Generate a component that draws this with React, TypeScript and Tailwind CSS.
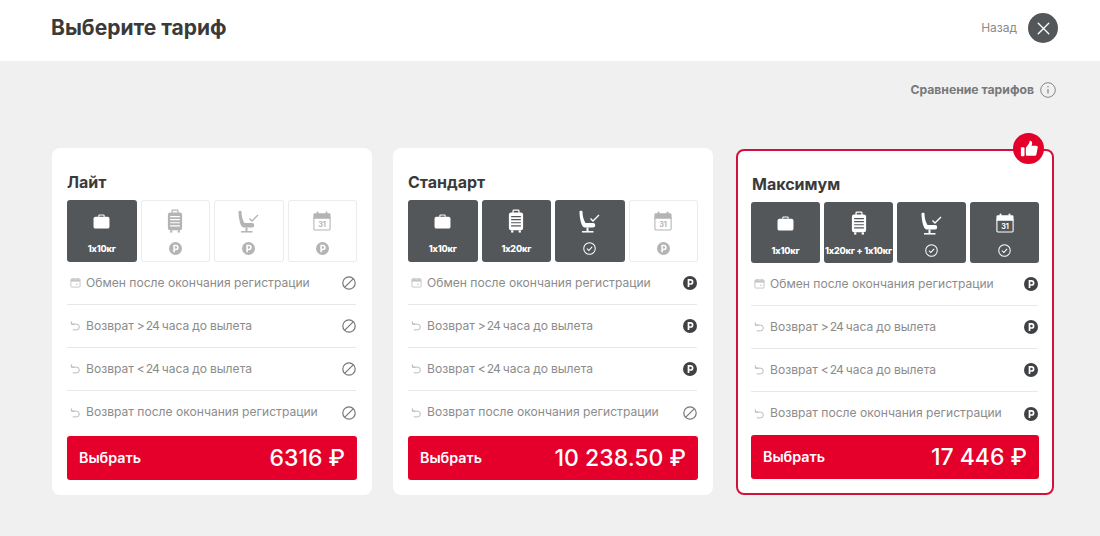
import { X } from "lucide-react";

type IconProps = { className?: string };

const Bag = ({ className }: IconProps) => (
  <svg viewBox="0 0 20 16" className={className} fill="currentColor">
    <path d="M6.500 3V2A1.500 1.500 0 0 1 8 .5h4A1.500 1.500 0 0 1 13.500 2v1h-1.200V2a.3.3 0 0 0-.3-.3H8a.3.3 0 0 0-.3.3v1z" />
    <rect x="1.500" y="3" width="17" height="12.500" rx="2" />
  </svg>
);

const Suitcase = ({ className, bg }: IconProps & { bg: string }) => (
  <svg viewBox="0 0 18 27" className={className}>
    <path d="M5 5V2A1.500 1.500 0 0 1 6.500.5h5A1.500 1.500 0 0 1 13 2v3h-1.400V2H6.400v3z" fill="currentColor" />
    <rect x="1" y="4" width="16" height="20" rx="2.500" fill="currentColor" />
    <rect x="3.500" y="24" width="2.500" height="2.500" fill="currentColor" />
    <rect x="12" y="24" width="2.500" height="2.500" fill="currentColor" />
    <path d="M3.500 8.500h11M3.500 12h11M3.500 15.500h11M3.500 19h11" stroke={bg} strokeWidth="1.300" />
  </svg>
);

const Seat = ({ className }: IconProps) => (
  <svg viewBox="0 0 22 23" className={className} fill="none">
    <path
      d="M.5 1.500C.5.500 3.500.500 3.500 1.500 3.500 6 4.500 10 6.500 13H14a2.200 2.200 0 0 1 0 4.500H5.500C2.500 17.500.5 8 .5 1.500z"
      fill="currentColor"
    />
    <rect x="7.500" y="17.500" width="2" height="3.500" fill="currentColor" />
    <path d="M3 21.800h11.500" stroke="currentColor" strokeWidth="1.500" />
    <path d="M11.500 8.500l2.500 2.500 6-6" stroke="currentColor" strokeWidth="1.400" />
  </svg>
);

const Calendar = ({ className }: IconProps) => (
  <svg viewBox="0 0 20 22" className={className}>
    <rect x="4" y="0.500" width="2" height="4" rx="1" fill="currentColor" />
    <rect x="14" y="0.500" width="2" height="4" rx="1" fill="currentColor" />
    <path d="M2 2.500h16A1.500 1.500 0 0 1 19.500 4v4.500H.5V4A1.500 1.500 0 0 1 2 2.500z" fill="currentColor" />
    <rect x="1" y="7" width="18" height="14" rx="1" fill="none" stroke="currentColor" strokeWidth="1.200" />
    <text x="10" y="17.500" textAnchor="middle" fontSize="8" fontWeight="700" fill="currentColor" fontFamily="Inter, sans-serif">
      31
    </text>
  </svg>
);

const SmallCalendar = () => (
  <svg viewBox="0 0 12 12" className="h-[11px] w-[11px] shrink-0 text-[#c4c4c4]" fill="none">
    <rect x="1" y="2" width="10" height="9" rx="1" stroke="currentColor" />
    <path d="M1 2.500h10V5H1z" fill="currentColor" />
    <path d="M3.500 1v2M8.500 1v2" stroke="currentColor" />
    <path d="M6.500 8h2" stroke="currentColor" />
  </svg>
);

const Back = () => (
  <svg viewBox="0 0 12 12" className="h-[11px] w-[11px] shrink-0 text-[#b5b5b5]" fill="none">
    <path d="M1.500 1.500v3h3" stroke="currentColor" />
    <path d="M1.500 4.500H7a3 3 0 0 1 0 6.300H3" stroke="currentColor" />
  </svg>
);

const RubleCircle = ({ className }: IconProps) => (
  <svg viewBox="0 0 14 14" className={className}>
    <circle cx="7" cy="7" r="7" fill="currentColor" />
    <path d="M5.500 11V3.800h2a2 2 0 0 1 0 4.200h-2" fill="none" stroke="#ffffff" strokeWidth="1.700" />
  </svg>
);

const Ban = () => (
  <svg viewBox="0 0 14 14" className="h-[14px] w-[14px] text-[#777]" fill="none">
    <circle cx="7" cy="7" r="6.200" stroke="currentColor" strokeWidth="1.200" />
    <path d="M2.800 11.200l8.400-8.400" stroke="currentColor" strokeWidth="1.200" />
  </svg>
);

const CheckCircle = () => (
  <svg viewBox="0 0 14 14" className="h-[13px] w-[13px]" fill="none">
    <circle cx="7" cy="7" r="6.200" stroke="currentColor" strokeWidth="1.100" />
    <path d="M4.300 7.200l2 2 3.500-4" stroke="currentColor" strokeWidth="1.200" />
  </svg>
);

type TileKind = "bag" | "case" | "seat" | "cal";

const Tile = ({ kind, active, label, short }: { kind: TileKind; active: boolean; label?: string; short?: boolean }) => {
  const bg = active ? "#54575a" : "#ffffff";
  return (
    <div
      className={`flex min-w-0 flex-1 flex-col items-center rounded-[3px] ${short ? "h-[61px]" : "h-[62px]"} ${
        active ? "bg-[#54575a] text-white" : "bg-white text-[#b4b4b4] ring-1 ring-[#ececec] ring-inset"
      }`}
    >
      <div className="flex h-[42px] w-full items-center justify-center">
        {kind === "bag" && <Bag className="h-[15px] w-[19px]" />}
        {kind === "case" && <Suitcase bg={bg} className="h-[24px] w-[16px]" />}
        {kind === "seat" && <Seat className="h-[23px] w-[22px]" />}
        {kind === "cal" && <Calendar className="h-[20px] w-[18px]" />}
      </div>
      <div className="flex h-[13px] items-center justify-center">
        {label ? (
          <span className="text-[9px] font-extrabold tracking-[-0.2px] whitespace-nowrap">{label}</span>
        ) : active ? (
          <CheckCircle />
        ) : (
          <RubleCircle className="h-[13px] w-[13px]" />
        )}
      </div>
    </div>
  );
};

type Status = "ban" | "rub";
type RowText = { text: string; icon: "cal" | "back"; sign?: string };

const Row = ({ row, status, last }: { row: RowText; status: Status; last?: boolean }) => (
  <div className={`flex h-[43px] items-center justify-between ${last ? "" : "border-b border-[#e8e8e8]"}`}>
    <div className="flex items-center gap-[5px] pl-[3px]">
      {row.icon === "cal" ? <SmallCalendar /> : <Back />}
      {row.sign ? (
        <span className="text-[12.100px] text-[#8c8c8c] whitespace-nowrap [word-spacing:-0.500px]">
          Возврат <span className="tracking-[-1px]">{row.sign}</span> {row.text}
        </span>
      ) : (
        <span className="text-[12.100px] text-[#8c8c8c] whitespace-nowrap">{row.text}</span>
      )}
    </div>
    {status === "ban" ? <Ban /> : <RubleCircle className="h-[14px] w-[14px] text-[#3f4144]" />}
  </div>
);

type Plan = {
  name: string;
  price: string;
  tiles: { kind: TileKind; active: boolean; label?: string }[];
  statuses: Status[];
};

const plans: Plan[] = [
  {
    name: "Лайт",
    price: "6316 ₽",
    tiles: [
      { kind: "bag", active: true, label: "1х10кг" },
      { kind: "case", active: false },
      { kind: "seat", active: false },
      { kind: "cal", active: false },
    ],
    statuses: ["ban", "ban", "ban", "ban"],
  },
  {
    name: "Стандарт",
    price: "10 238.50 ₽",
    tiles: [
      { kind: "bag", active: true, label: "1х10кг" },
      { kind: "case", active: true, label: "1х20кг" },
      { kind: "seat", active: true },
      { kind: "cal", active: false },
    ],
    statuses: ["rub", "rub", "rub", "ban"],
  },
  {
    name: "Максимум",
    price: "17 446 ₽",
    tiles: [
      { kind: "bag", active: true, label: "1х10кг" },
      { kind: "case", active: true, label: "1х20кг + 1х10кг" },
      { kind: "seat", active: true },
      { kind: "cal", active: true },
    ],
    statuses: ["rub", "rub", "rub", "rub"],
  },
];

const rows: RowText[] = [
  { text: "Обмен после окончания регистрации", icon: "cal" },
  { text: "часа до вылета", sign: "> 24", icon: "back" },
  { text: "часа до вылета", sign: "< 24", icon: "back" },
  { text: "Возврат после окончания регистрации", icon: "back" },
];

const Card = ({ plan, featured }: { plan: Plan; featured?: boolean }) => (
  <div
    className={`relative shrink-0 rounded-[8px] bg-white ${
      featured
        ? "mt-px ml-[2px] h-[346px] w-[318px] border-2 border-[#d2123c] px-[13px] pt-[17px]"
        : "h-[347px] w-[320px] px-[15px] pt-[18px]"
    }`}
  >
    {featured && (
      <div className="absolute -top-[18px] right-[8px] flex h-[31px] w-[31px] items-center justify-center rounded-full bg-[#e4002b]">
        <svg viewBox="0 0 20 20" className="h-[18px] w-[18px]" fill="white">
          <rect x="1" y="8" width="4" height="10" rx="1" />
          <path d="M6.500 8.500L10 4c.4-1 .7-2 .7-3 1.800-.3 2.800 1 2.800 2.500 0 1-.3 2-.8 3H18c1.200 0 2 1 1.700 2.200l-1.500 7.300c-.2 1-1 1.500-2 1.500H8c-.8 0-1.500-.7-1.500-1.500z" />
        </svg>
      </div>
    )}
    <div
      className={`flex h-[34px] items-center pb-[2px] text-[16px] leading-none font-bold text-[#3a3a3a] ${
        featured ? "pl-px" : ""
      }`}
    >
      {plan.name}
    </div>
    <div className="flex gap-[4px]">
      {plan.tiles.map((t) => (
        <Tile key={t.kind} kind={t.kind} active={t.active} label={t.label} short={featured} />
      ))}
    </div>
    <div className="pr-[1px]">
      {rows.map((r, i) => (
        <Row key={i} row={r} status={plan.statuses[i]} last={i === 3} />
      ))}
    </div>
    <div
      className={`flex h-[44px] items-center justify-between rounded-[3px] bg-[#e4002b] px-[12px] text-white ${
        featured ? "" : "mt-[2px]"
      }`}
    >
      <span className="pb-[1px] text-[14.300px] font-semibold">Выбрать</span>
      <span className="text-[23px] font-medium">{plan.price}</span>
    </div>
  </div>
);

export default function App() {
  return (
    <div className="h-[536px] w-[1100px] overflow-hidden bg-[#f0f0f0] font-['Inter',sans-serif]">
      <header className="flex h-[61px] items-center justify-between bg-white pr-[42px] pb-[5px] pl-[51px]">
        <h1 className="text-[21px] font-bold text-[#3a3a3a]">Выберите тариф</h1>
        <div className="flex items-center gap-[11px]">
          <span className="text-[12px] text-[#8a8a8a]">Назад</span>
          <div className="flex h-[30px] w-[30px] items-center justify-center rounded-full bg-[#54575a] text-white">
            <X size={21} strokeWidth={1.600} />
          </div>
        </div>
      </header>
      <div className="flex h-[58px] items-center justify-end gap-[6px] pr-[44px]">
        <span className="text-[12.200px] font-bold text-[#77797b]">Сравнение тарифов</span>
        <svg viewBox="0 0 16 16" className="h-[16px] w-[16px] text-[#77797b]" fill="none">
          <circle cx="8" cy="8" r="7.300" stroke="currentColor" strokeWidth="0.900" />
          <path d="M8 7v4.500" stroke="currentColor" strokeWidth="1.100" />
          <circle cx="8" cy="4.800" r="0.700" fill="currentColor" />
        </svg>
      </div>
      <main className="mt-[29px] flex items-start gap-[21px] pl-[52px]">
        {plans.map((p, i) => (
          <Card key={p.name} plan={p} featured={i === 2} />
        ))}
      </main>
    </div>
  );
}
